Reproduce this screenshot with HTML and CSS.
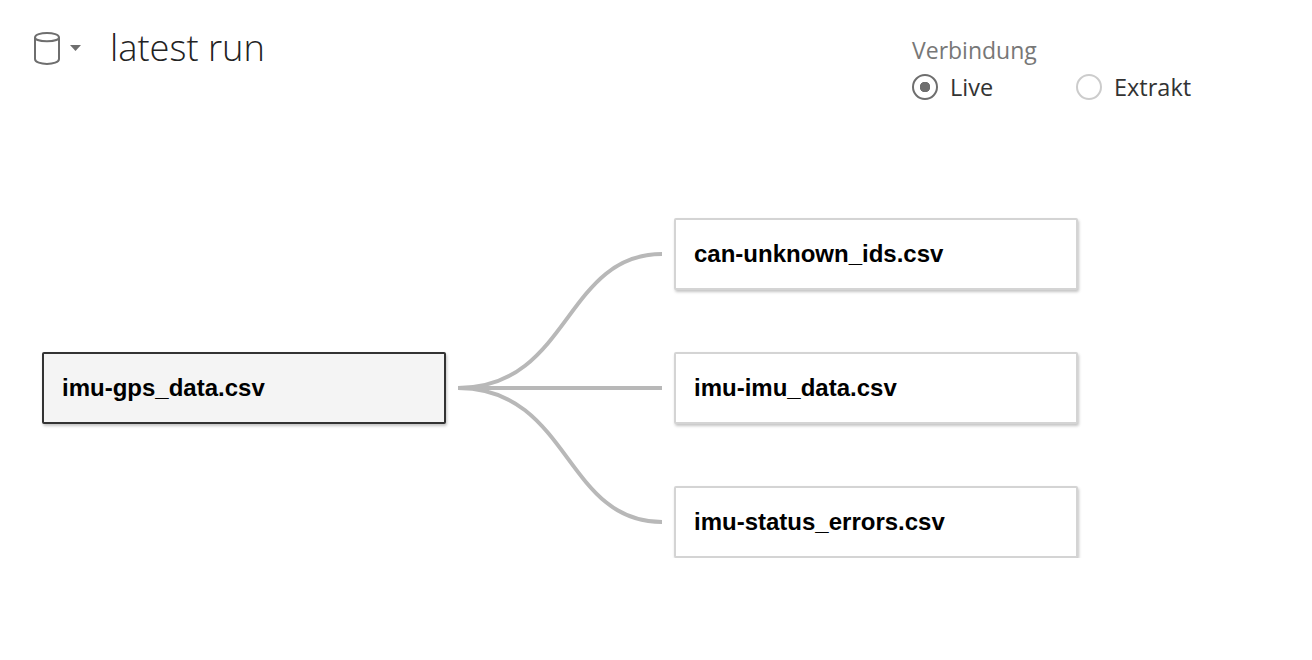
FILE: index.html
```html
<!DOCTYPE html>
<html>
<head>
  <title>latest run</title>
  <link rel="stylesheet" href="styles.css">
</head>
<body>
  <header class="top">
    <div class="source">
      <svg class="db-icon" width="26" height="35" viewBox="0 0 26 35">
        <path d="M1 6.500C1 .5 25 .5 25 6.500V28C25 34.500 1 34.500 1 28Z M1 6.500C1 11.500 25 11.500 25 6.500" fill="none" stroke="#6e6e6e" stroke-width="2"/>
      </svg>
      <svg class="caret" width="11" height="6" viewBox="0 0 11 6">
        <path d="M0 0H11L5.500 6Z" fill="#6e6e6e"/>
      </svg>
      <h1 class="title">latest run</h1>
    </div>
    <div class="connection">
      <div class="connection-label">Verbindung</div>
      <div class="radios">
        <div class="radio radio-live"><span class="dot dot-on"></span>Live</div>
        <div class="radio"><span class="dot"></span>Extrakt</div>
      </div>
    </div>
  </header>

  <main class="diagram">
    <div class="node node-root">imu-gps_data.csv</div>
    <svg class="links" width="204" height="304" viewBox="0 0 204 304">
      <g fill="none" stroke="#b8b8b8" stroke-width="4">
        <path d="M0 152C112 152 106 18 204 18"/>
        <path d="M0 152H204"/>
        <path d="M0 152C112 152 106 286 204 286"/>
      </g>
    </svg>
    <div class="children">
      <div class="node">can-unknown_ids.csv</div>
      <div class="node">imu-imu_data.csv</div>
      <div class="node">imu-status_errors.csv</div>
    </div>
  </main>
</body>
</html>
```

FILE: styles.css
```css
body {
  margin: 0;
  background-color: #fff;
  font-family: "Open Sans", sans-serif;
  overflow: hidden;
}

.top {
  display: flex;
  justify-content: space-between;
  height: 218px;
  padding-left: 34px;
  padding-right: 100px;
  box-sizing: border-box;
}

.source {
  display: flex;
  align-items: flex-start;
  padding-top: 31px;
}

.caret {
  margin-left: 10px;
  margin-top: 14px;
}

.title {
  margin: -6px 0 0 29px;
  font-size: 36.300px;
  font-weight: 300;
  line-height: 44px;
  color: #222;
}

.connection {
  width: 300px;
  padding-top: 36px;
}

.connection-label {
  font-size: 23px;
  line-height: 28px;
  color: #777;
}

.radios {
  display: flex;
  margin-top: 9px;
}

.radio {
  display: flex;
  align-items: center;
  font-size: 23.500px;
  line-height: 28px;
  color: #333;
}

.radio-live {
  width: 164px;
}

.dot {
  width: 22px;
  height: 22px;
  margin-right: 12px;
  border: 2px solid #ccc;
  border-radius: 50%;
}

.dot-on {
  border-color: #6e6e6e;
  background: radial-gradient(circle, #6e6e6e 0 5px, transparent 5.500px);
}

.diagram {
  display: flex;
  align-items: center;
  padding-left: 42px;
}

.node {
  width: 404px;
  height: 72px;
  box-sizing: border-box;
  display: flex;
  align-items: center;
  padding-left: 18px;
  border: 2px solid #d4d4d4;
  border-radius: 2px;
  background-color: #fff;
  box-shadow: 1px 2px 3px #c4c4c4;
  font-family: "Liberation Sans", Arial, sans-serif;
  font-size: 24px;
  font-weight: bold;
  color: #000;
}

.node-root {
  border-color: #333;
  background-color: #f4f4f4;
}

.links {
  margin-left: 12px;
  margin-right: 12px;
}

.children {
  display: flex;
  flex-direction: column;
  gap: 62px;
}
```
